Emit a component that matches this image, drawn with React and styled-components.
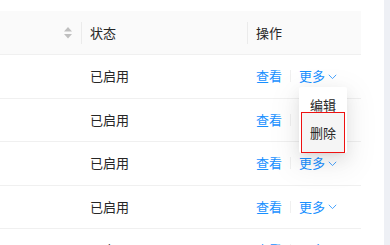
import React from 'react';
import styled, { createGlobalStyle } from 'styled-components';

const GlobalStyle = createGlobalStyle`
  html, body {
    margin: 0;
    padding: 0;
    background: #fff;
  }
  body {
    font-family: "Noto Sans CJK SC", "Noto Sans", sans-serif;
    font-size: 13px;
    color: #262626;
    overflow: hidden;
  }
`;

const Page = styled.div`
  display: flex;
  height: 245px;
  width: 390px;
  overflow: hidden;
`;

const Content = styled.div`
  flex: 1;
  padding: 11px 23px 0 0;
  background: #fff;
`;

const ScrollStrip = styled.div`
  width: 6px;
  background: #eef0f5;
`;

const Table = styled.div`
  width: 361px;
`;

const Row = styled.div`
  display: grid;
  grid-template-columns: 82px 166px 113px;
  align-items: center;
  box-sizing: border-box;
  height: ${({ $head }) => ($head ? '44px' : '43.5px')};
  border-bottom: 1px solid #f0f0f0;
  background: ${({ $head }) => ($head ? '#fafafa' : '#fff')};
`;

const HeadCell = styled.div`
  position: relative;
  display: flex;
  align-items: center;
  justify-content: ${({ $end }) => ($end ? 'flex-end' : 'flex-start')};
  padding: 0 ${({ $end }) => ($end ? '10px' : '8px')};
  line-height: 22px;

  &::before {
    content: '';
    display: ${({ $divider }) => ($divider ? 'block' : 'none')};
    position: absolute;
    left: -1px;
    top: 50%;
    width: 1px;
    height: 22px;
    transform: translateY(-50%);
    background: rgba(0, 0, 0, 0.06);
  }
`;

const Cell = styled.div`
  display: flex;
  align-items: center;
  padding: 0 8px;
  line-height: 22px;
`;

const LinkText = styled.a`
  color: #1890ff;
  text-decoration: none;
  cursor: pointer;
`;

const Split = styled.span`
  display: inline-block;
  width: 1px;
  height: 0.9em;
  margin: 0 8px;
  background: #f0f0f0;
`;

const More = styled.span`
  position: relative;
  display: inline-flex;
  align-items: center;
  color: #1890ff;
  cursor: pointer;

  svg {
    margin-left: 3px;
    margin-top: 1px;
  }
`;

const Menu = styled.div`
  position: absolute;
  top: 100%;
  left: 0;
  z-index: 10;
  width: 48px;
  background: #fff;
  border-radius: 2px;
  box-shadow: 0 3px 6px -4px rgba(0, 0, 0, 0.12), 0 6px 16px 0 rgba(0, 0, 0, 0.08),
    0 9px 28px 8px rgba(0, 0, 0, 0.05);
`;

const MenuItem = styled.div`
  box-sizing: border-box;
  text-align: center;
  color: #262626;
  padding: ${({ $active }) => ($active ? '0' : '10px 0 0')};
  height: ${({ $active }) => ($active ? '41px' : '25px')};
  line-height: ${({ $active }) => ($active ? '39px' : '15px')};
  margin: ${({ $active }) => ($active ? '0 2px 0 2px' : '0')};
  background: ${({ $active }) => ($active ? '#f5f5f5' : 'transparent')};
  border: ${({ $active }) => ($active ? '1px solid #ee1111' : 'none')};
`;

const SortIcon = () => (
  <svg width="8" height="12" viewBox="0 0 8 12" fill="#bfbfbf">
    <path d="M4 0 L8 4.6 L0 4.6 Z" />
    <path d="M0 7 L8 7 L4 11.6 Z" />
  </svg>
);

const Chevron = () => (
  <svg width="9" height="6" viewBox="0 0 9 6" fill="none">
    <path d="M0.8 0.8 L4.5 4.6 L8.2 0.8" stroke="#4aa5ff" strokeWidth="1" />
  </svg>
);

const rows = [0, 1, 2, 3, 4];

export default function App() {
  return (
    <Page>
      <GlobalStyle />
      <Content>
        <Table>
          <Row $head>
            <HeadCell $end>
              <SortIcon />
            </HeadCell>
            <HeadCell $divider>状态</HeadCell>
            <HeadCell $divider>操作</HeadCell>
          </Row>
          {rows.map((i) => (
            <Row key={i}>
              <Cell />
              <Cell>已启用</Cell>
              <Cell>
                <LinkText>查看</LinkText>
                <Split />
                <More>
                  更多
                  <Chevron />
                  {i === 0 && (
                    <Menu>
                      <MenuItem>编辑</MenuItem>
                      <MenuItem $active>删除</MenuItem>
                    </Menu>
                  )}
                </More>
              </Cell>
            </Row>
          ))}
        </Table>
      </Content>
      <ScrollStrip />
    </Page>
  );
}
